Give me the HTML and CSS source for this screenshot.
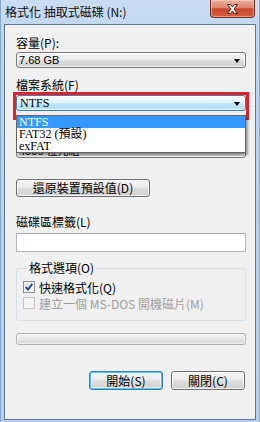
FILE: index.html
```html
<!DOCTYPE html>
<html>
<head>
  <title>格式化 抽取式磁碟 (N:)</title>
  <link rel="stylesheet" href="styles.css">
</head>
<body>
  <div class="window">
    <div class="titlebar">
      <span class="title">格式化 抽取式磁碟 (N:)</span>
      <div class="close-btn">
        <svg width="13" height="10" viewBox="0 0 13 10">
          <path d="M1.5 0.5 H4.5 L6.5 3 L8.5 0.5 H11.5 L8 5 L11.5 9.5 H8.5 L6.5 7 L4.5 9.5 H1.5 L5 5 Z" fill="#fff" stroke="#5a1d14" stroke-width="1" stroke-linejoin="round"/>
        </svg>
      </div>
    </div>

    <div class="client">
      <div class="label lbl-size">容量(P):</div>
      <div class="combo combo-size"><span>7.68 GB</span><i class="arrow"></i></div>

      <div class="label lbl-fs">檔案系統(F)</div>
      <div class="combo-wrap">
        <div class="combo combo-hot"><span class="raster">NTFS</span><i class="arrow"></i></div>
        <ul class="dropdown">
          <li class="selected">NTFS</li>
          <li>FAT32 (預設)</li>
          <li>exFAT</li>
        </ul>
      </div>

      <div class="label lbl-unit">配置單位大小(A)</div>
      <div class="combo combo-unit"><span>4096 位元組</span><i class="arrow"></i></div>

      <button class="btn btn-restore">還原裝置預設值(D)</button>

      <div class="label lbl-name">磁碟區標籤(L)</div>
      <div class="textbox"></div>

      <fieldset class="group">
        <legend>格式選項(O)</legend>
        <div class="check">
          <span class="box checked">
            <svg width="8" height="8" viewBox="0 0 8 8"><path d="M0.8 4.2 L3 6.6 L7.3 0.9" fill="none" stroke="#263f8c" stroke-width="1.8"/></svg>
          </span>
          快速格式化(Q)
        </div>
        <div class="check disabled">
          <span class="box"></span>
          建立一個 MS-DOS 開機磁片(M)
        </div>
      </fieldset>

      <div class="progress"></div>

      <div class="actions">
        <button class="btn btn-default">開始(S)</button>
        <button class="btn">關閉(C)</button>
      </div>
    </div>
  </div>
</body>
</html>
```

FILE: styles.css
```css
* { box-sizing: border-box; }
body {
  margin: 0;
  background: #fff;
  font-family: "Liberation Sans", "Noto Sans CJK TC", sans-serif;
  font-size: 12px;
  color: #000;
}
.window {
  width: 260px;
  height: 422px;
  padding: 0 4px 2px 4px;
  display: flex;
  flex-direction: column;
  background: linear-gradient(to bottom, #cadcf1 0, #bed4ec 40px, #b9d0ea 100%);
  box-shadow: inset 1px 0 #86a6cc, inset -1px 0 #86a6cc;
}
.titlebar {
  height: 24px;
  display: flex;
  align-items: flex-start;
  justify-content: space-between;
}
.title {
  margin-top: 5px;
  padding-left: 1px;
  font-family: "Noto Sans CJK TC", sans-serif;
  font-size: 12px;
  line-height: 14px;
  color: #111;
}
.close-btn {
  width: 45px;
  height: 18px;
  margin-right: 1px;
  border: 1px solid #6e2b22;
  border-top: none;
  border-radius: 0 0 4px 4px;
  background: linear-gradient(to bottom, #eab0a2 0, #dd8570 45%, #c8472d 52%, #d2603f 100%);
  box-shadow: inset 0 0 0 1px rgba(255, 220, 210, 0.45);
  display: flex;
  align-items: center;
  justify-content: center;
}
.client {
  flex: 1;
  border: 1px solid #5c7797;
  background: #f0f0f0;
  padding: 0 9px 0 11px;
}
.label {
  font-family: "Noto Sans CJK TC", sans-serif;
  line-height: 14px;
  height: 14px;
  white-space: nowrap;
}
.lbl-size { margin-top: 11px; }
.lbl-fs { margin-top: 10px; }
.lbl-unit { margin-top: 14px; }
.lbl-name { margin-top: 18px; }

.combo {
  height: 16px;
  border: 1px solid #7a7a7a;
  border-radius: 3px;
  background: linear-gradient(to bottom, #f4f4f4 0, #ececec 45%, #dcdcdc 55%, #d0d0d0 100%);
  box-shadow: inset 0 0 0 1px rgba(255, 255, 255, 0.7);
  display: flex;
  align-items: center;
  justify-content: space-between;
  padding: 0 5px 0 2px;
  font-size: 11px;
  white-space: nowrap;
}
.combo-size { margin-top: 2px; }
.combo-unit { margin-top: 3px; }
.arrow {
  width: 0;
  height: 0;
  border-left: 3.5px solid transparent;
  border-right: 3.5px solid transparent;
  border-top: 4px solid #000;
  margin-top: 1px;
}
.combo-wrap {
  position: relative;
  margin-top: 3px;
}
/* red marker drawn over the focused combo */
.combo-wrap::after {
  content: "";
  position: absolute;
  top: -3px;
  left: -3px;
  right: -3px;
  height: 22px;
  border: 3px solid #e0212b;
  pointer-events: none;
}
.combo-hot {
  border-color: #3c7fb1;
  background: linear-gradient(to bottom, #f6fcfe 0, #e6f5fd 45%, #c2e6f9 55%, #acdbf4 100%);
}
.raster {
  font-family: "Liberation Serif", "Noto Sans CJK TC", serif;
  font-size: 12px;
  margin-left: 1px;
}
.dropdown {
  position: absolute;
  top: 20px;
  left: 0;
  width: 230px;
  margin: 0;
  padding: 0;
  list-style: none;
  background: #fff;
  border: 1px solid #646464;
  box-shadow: 2px 2px 2px rgba(0, 0, 0, 0.35);
  z-index: 2;
}
.dropdown li {
  height: 12px;
  line-height: 12px;
  padding-left: 2px;
  font-family: "Liberation Serif", "Noto Sans CJK TC", serif;
  font-size: 12px;
  white-space: nowrap;
}
.dropdown li.selected {
  background: #3399ff;
  color: #fff;
}

.btn {
  display: flex;
  align-items: center;
  justify-content: center;
  margin: 0;
  padding: 0;
  border: 1px solid #707070;
  border-radius: 3px;
  background: linear-gradient(to bottom, #f2f2f2 0, #ebebeb 48%, #dddddd 52%, #cfcfcf 100%);
  box-shadow: inset 0 0 0 1px rgba(255, 255, 255, 0.75);
  font-family: "Noto Sans CJK TC", sans-serif;
  font-size: 12px;
  line-height: 14px;
  color: #000;
}
.btn-restore {
  margin-top: 21px;
  width: 134px;
  height: 18px;
}
.textbox {
  margin-top: 4px;
  height: 19px;
  background: #fff;
  border: 1px solid #b5bac0;
  border-top-color: #abadb3;
}
.group {
  margin: 9px 0 0 0;
  padding: 4px 0 9px 6px;
  border: 1px solid #d5dfe5;
  border-radius: 3px;
  min-width: 0;
}
.group legend {
  margin-left: 4px;
  padding: 0 2px;
  font-family: "Noto Sans CJK TC", sans-serif;
  line-height: 14px;
}
.check {
  height: 16px;
  display: flex;
  align-items: center;
  gap: 4px;
  font-family: "Noto Sans CJK TC", sans-serif;
  white-space: nowrap;
}
.check.disabled { color: #a0a0a0; }
.box {
  width: 12px;
  height: 12px;
  border: 1px solid #8e8f8f;
  background: linear-gradient(135deg, #d6d6d6 0, #f2f2f2 60%, #fff 100%);
  box-shadow: inset 0 0 0 1px #f4f4f4;
  display: flex;
  align-items: center;
  justify-content: center;
}
.check.disabled .box {
  border-color: #c5c5c5;
  background: #f4f4f4;
}
.progress {
  margin-top: 12px;
  height: 12px;
  border: 1px solid #b2b2b2;
  border-radius: 3px;
  background: linear-gradient(to bottom, #f3f3f3 0, #e6e6e6 50%, #d6d6d6 100%);
  box-shadow: inset 0 0 0 1px rgba(255, 255, 255, 0.6);
}
.actions {
  margin-top: 26px;
  margin-right: 1px;
  display: flex;
  justify-content: flex-end;
  gap: 8px;
}
.actions .btn {
  width: 74px;
  height: 19px;
}
.btn-default {
  border-color: #3c7fb1;
  box-shadow: inset 0 0 0 1px #4ec2f0, inset 0 0 0 2px rgba(255, 255, 255, 0.5);
}
```
